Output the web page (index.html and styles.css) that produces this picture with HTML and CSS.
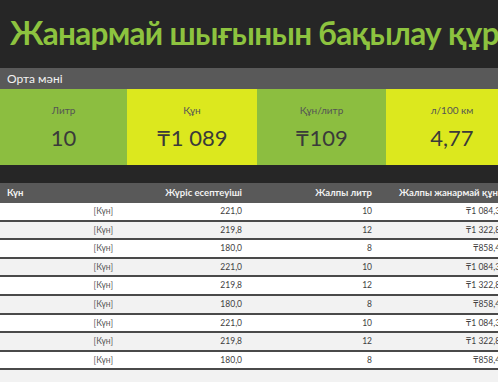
FILE: index.html
```html
<!DOCTYPE html>
<html lang="kk">
<head>
<meta charset="utf-8">
<title>Жанармай шығынын бақылау құралы</title>
<link rel="stylesheet" href="styles.css">
</head>
<body>
<div class="page">
  <header class="title">Жанармай шығынын бақылау құралы</header>
  <div class="band">Орта мәні</div>
  <div class="tiles">
    <div class="tile green t1"><div class="label">Литр</div><div class="value">10</div></div>
    <div class="tile yellow t2"><div class="label">Құн</div><div class="value">₸1 089</div></div>
    <div class="tile green t3"><div class="label">Құн/литр</div><div class="value">₸109</div></div>
    <div class="tile yellow t4"><div class="label">л/100 км</div><div class="value">4,77</div></div>
  </div>
  <div class="spacer"></div>
  <div class="table">
    <div class="row head">
      <div class="c1">Күн</div><div class="c2">Жүріс есептеуіші</div><div class="c3">Жалпы литр</div><div class="c4">Жалпы жанармай құны</div>
    </div>
    <div class="row"><div class="c1 day">[Күн]</div><div class="c2">221,0</div><div class="c3">10</div><div class="c4">₸1 084,35</div></div>
    <div class="row alt"><div class="c1 day">[Күн]</div><div class="c2">219,8</div><div class="c3">12</div><div class="c4">₸1 322,88</div></div>
    <div class="row"><div class="c1 day">[Күн]</div><div class="c2">180,0</div><div class="c3">8</div><div class="c4">₸858,40</div></div>
    <div class="row alt"><div class="c1 day">[Күн]</div><div class="c2">221,0</div><div class="c3">10</div><div class="c4">₸1 084,35</div></div>
    <div class="row"><div class="c1 day">[Күн]</div><div class="c2">219,8</div><div class="c3">12</div><div class="c4">₸1 322,88</div></div>
    <div class="row alt"><div class="c1 day">[Күн]</div><div class="c2">180,0</div><div class="c3">8</div><div class="c4">₸858,40</div></div>
    <div class="row"><div class="c1 day">[Күн]</div><div class="c2">221,0</div><div class="c3">10</div><div class="c4">₸1 084,35</div></div>
    <div class="row alt"><div class="c1 day">[Күн]</div><div class="c2">219,8</div><div class="c3">12</div><div class="c4">₸1 322,88</div></div>
    <div class="row"><div class="c1 day">[Күн]</div><div class="c2">180,0</div><div class="c3">8</div><div class="c4">₸858,40</div></div>
    <div class="row alt"><div class="c1"></div><div class="c2"></div><div class="c3"></div><div class="c4"></div></div>
  </div>
</div>
</body>
</html>
```

FILE: styles.css
```css
html, body {
  margin: 0;
  padding: 0;
  background: #262626;
}
body {
  width: 498px;
  height: 382px;
  overflow: hidden;
  font-family: Lato, "Open Sans", sans-serif;
}
.page {
  width: 498px;
  overflow: hidden;
}
.title {
  box-sizing: border-box;
  height: 68px;
  padding: 14px 0 0 10px;
  font-size: 31.5px;
  line-height: 38px;
  font-weight: 700;
  letter-spacing: -0.7px;
  color: #8dc33f;
  white-space: nowrap;
  background: #262626;
}
.band {
  height: 21px;
  line-height: 21px;
  padding-left: 7px;
  font-size: 12px;
  color: #f2f2f2;
  background: #595959;
}
.tiles {
  display: flex;
  height: 76px;
  width: 560px;
}
.tile {
  flex: none;
  display: flex;
  flex-direction: column;
  align-items: center;
  padding-top: 14px;
  box-sizing: border-box;
  color: #3a3a3a;
}
.t1 { width: 127px; }
.t2 { width: 130px; }
.t3 { width: 129px; }
.t4 { width: 132px; }
.green { background: #8cbe40; }
.yellow { background: #dce81e; }
.label {
  font-size: 10px;
  line-height: 14px;
  color: #555555;
}
.value {
  margin-top: 8px;
  font-size: 22px;
  line-height: 26px;
}
.spacer {
  height: 18px;
  background: #262626;
}
.table {
  width: 510px;
}
.row {
  display: grid;
  grid-template-columns: 118px 129px 130px 133px;
  box-sizing: border-box;
  height: 18.6px;
  background: #ffffff;
  border-bottom: 2px solid #4a4a4a;
  font-size: 8.5px;
  line-height: 16.6px;
  color: #3f3f3f;
}
.row.alt {
  background: #f2f2f2;
}
.row > div {
  text-align: right;
  padding-right: 5px;
  white-space: nowrap;
}
.row .day {
  color: #595959;
}
.row.head {
  height: 20px;
  line-height: 20px;
  border-bottom: none;
  background: #595959;
  color: #f2f2f2;
  font-size: 9.5px;
  font-weight: 700;
}
.row.head .c1 {
  text-align: left;
  padding-left: 7px;
}
```
